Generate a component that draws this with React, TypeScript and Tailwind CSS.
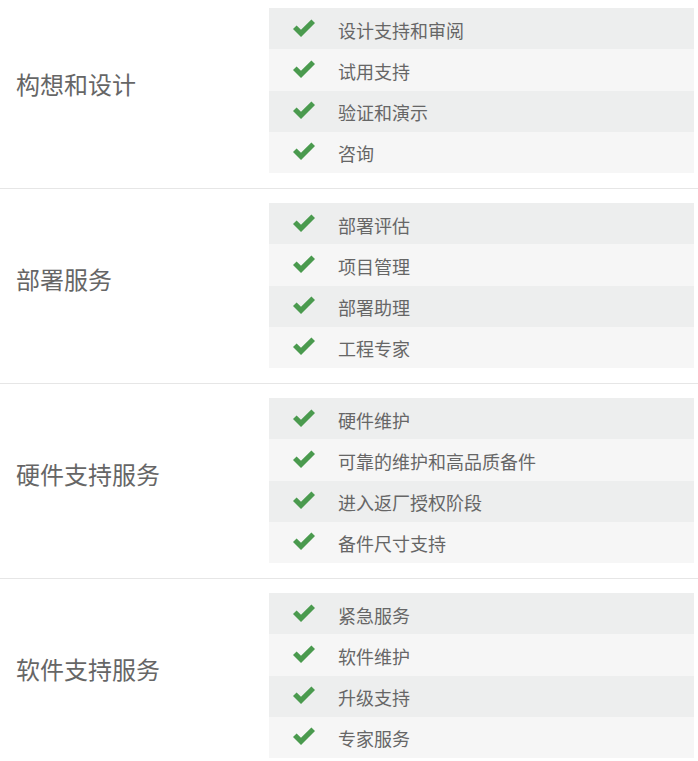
interface Section {
  title: string
  items: string[]
}

const SECTIONS: Section[] = [
  { title: '构想和设计',   items: ['设计支持和审阅', '试用支持', '验证和演示', '咨询'] },
  { title: '部署服务',     items: ['部署评估', '项目管理', '部署助理', '工程专家'] },
  { title: '硬件支持服务', items: ['硬件维护', '可靠的维护和高品质备件', '进入返厂授权阶段', '备件尺寸支持'] },
  { title: '软件支持服务', items: ['紧急服务', '软件维护', '升级支持', '专家服务'] },
]

function Check() {
  return (
    <svg viewBox="0 0 22 20" className="h-[20px] w-[22px] text-[#4a9a4e]" fill="currentColor">
      <polygon points="0,12 3.6,8.4 8,12.8 18.4,2.4 22,6 8,20" />
    </svg>
  )
}

export default function App() {
  return (
    <div
      className="w-[698px] bg-white text-[#666]"
      style={{ fontFamily: '"Noto Sans CJK SC", "Noto Sans", sans-serif' }}
    >
      {SECTIONS.map((s, i) => (
        <section
          key={s.title}
          className={`grid grid-cols-[269px_1fr] border-b border-[#e6e6e6] pr-[4px] pb-[15px] ${i === 0 ? 'pt-[8px]' : 'pt-[14px]'}`}
        >
          <div className="flex items-center pl-[16px] pb-[14px]">
            <h3 className="text-[24px] leading-none font-normal">{s.title}</h3>
          </div>
          <ul>
            {s.items.map((item, j) => (
              <li
                key={item}
                className={`flex h-[41.25px] items-center pl-[24px] ${j % 2 === 0 ? 'bg-[#edeeee]' : 'bg-[#f6f6f6]'}`}
              >
                <span className="pb-[4px]">
                  <Check />
                </span>
                <span className="pl-[23px] pt-[2px] text-[18px] leading-none">{item}</span>
              </li>
            ))}
          </ul>
        </section>
      ))}
    </div>
  )
}
